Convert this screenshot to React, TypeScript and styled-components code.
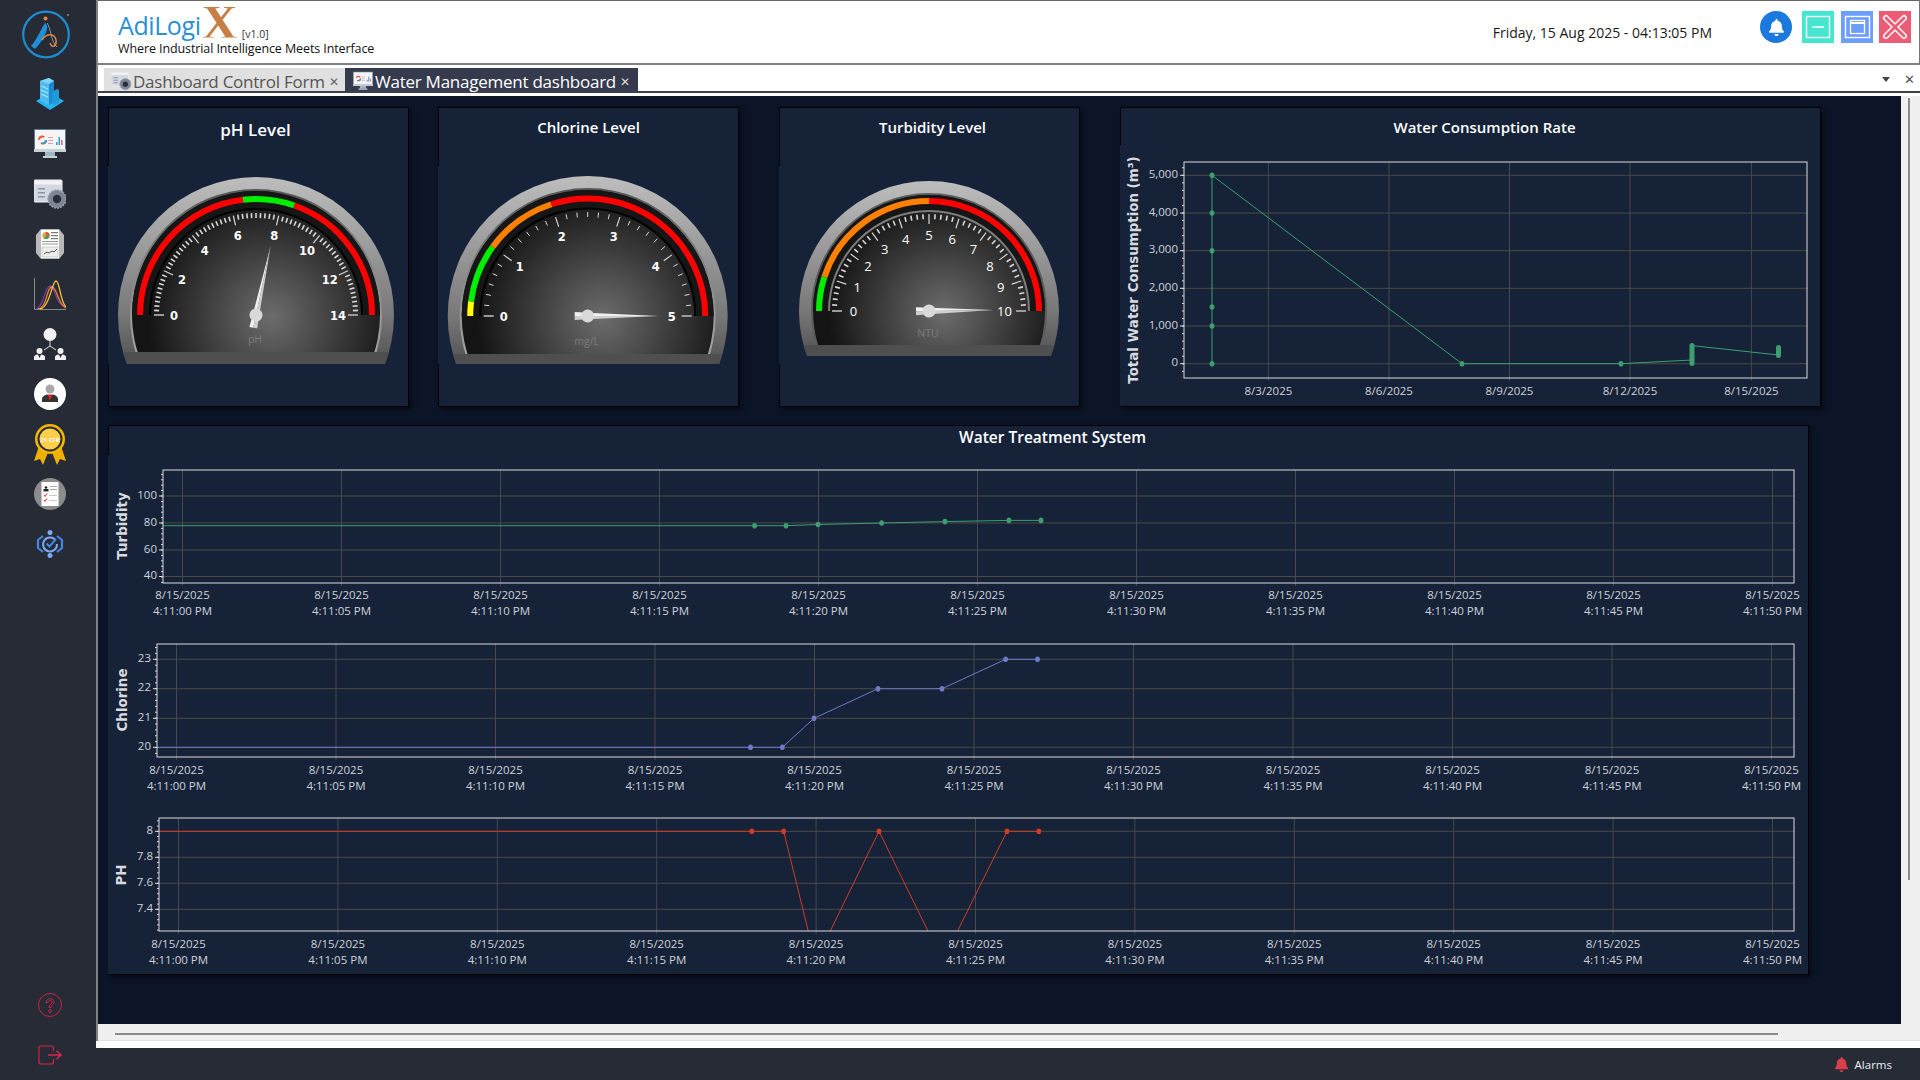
import React from "react";
import styled, { createGlobalStyle } from "styled-components";
import { FaBell } from "react-icons/fa";

const GlobalStyle = createGlobalStyle`
  html, body { margin: 0; padding: 0; background: #272b36; }
  * { box-sizing: border-box; }
  body { font-family: "Open Sans", "Noto Sans", sans-serif; }
`;

const Page = styled.div`
  width: 1920px;
  height: 1080px;
  display: grid;
  grid-template-columns: 96px 1fr;
  grid-template-rows: 1fr 32px;
  overflow: hidden;
  background: #272b36;
`;

const Sidebar = styled.aside`
  grid-row: 1 / 3;
  display: flex;
  flex-direction: column;
  align-items: center;
  padding: 10px 0 0 4px;
  background: #272b36;
`;

const LogoWrap = styled.div`
  width: 50px;
  height: 49px;
  margin: 0 0 10px -6px;
`;

const NavItem = styled.div`
  width: 32px;
  height: 50px;
  display: flex;
  align-items: center;
  justify-content: center;
`;

const SidebarBottom = styled.div`
  margin-top: auto;
  padding-bottom: 15px;
  display: flex;
  flex-direction: column;
  align-items: center;
  gap: 28px;
`;

const Main = styled.main`
  display: flex;
  flex-direction: column;
  background: #fff;
  min-width: 0;
`;

const Framed = styled.div`
  flex: 1;
  display: flex;
  flex-direction: column;
  border-left: 2px solid #808080;
  min-height: 0;
`;

const Header = styled.header`
  height: 65px;
  display: flex;
  align-items: flex-start;
  padding: 10px 8px 0 20px;
  background: #fff;
  border-top: 1px solid #666;
  border-right: 1px solid #777;
  border-bottom: 2px solid #808080;
`;

const Brand = styled.div`
  display: flex;
  flex-direction: column;
`;

const BrandLine = styled.div`
  height: 29px;
  display: flex;
  align-items: flex-end;
  white-space: nowrap;
`;

const BrandName = styled.span`
  font-size: 25px;
  line-height: 29px;
  color: #2a8fd6;
  letter-spacing: -0.4px;
`;

const BrandX = styled.span`
  font-family: "Liberation Serif", serif;
  font-weight: 700;
  font-size: 50px;
  line-height: 36px;
  height: 36px;
  margin-left: 1px;
  color: #c87f45;
  clip-path: inset(3px 0 2.4px 0);
`;

const Version = styled.span`
  font-size: 10.5px;
  line-height: 12px;
  color: #333;
  margin: 0 0 0 4px;
`;

const Tagline = styled.div`
  margin-top: 1px;
  font-size: 12.5px;
  line-height: 16px;
  color: #111;
  letter-spacing: -0.1px;
  white-space: nowrap;
`;

const Clock = styled.div`
  margin-left: auto;
  margin-right: 48px;
  padding-top: 12px;
  font-size: 14px;
  line-height: 19px;
  color: #1a1a1a;
  white-space: nowrap;
`;

const BellButton = styled.div`
  width: 32px;
  height: 32px;
  margin-right: 10px;
  border-radius: 50%;
  background: #1a78de;
  color: #fff;
  display: flex;
  align-items: center;
  justify-content: center;
`;

const WindowButton = styled.div<{ $bg: string; $gap?: number }>`
  width: 32px;
  height: 32px;
  margin-right: ${(p) => p.$gap ?? 0}px;
  background: ${(p) => p.$bg};
`;

const TabStrip = styled.div`
  height: 28px;
  display: flex;
  align-items: flex-end;
  padding-left: 6px;
  background: #fff;
  border-bottom: 2px solid #3a4050;
`;

const Tab = styled.div<{ $active?: boolean }>`
  height: 23px;
  width: ${(p) => (p.$active ? 293 : 241)}px;
  display: flex;
  align-items: center;
  gap: 2px;
  padding: 3px 0 0 ${(p) => (p.$active ? 8 : 7)}px;
  background: ${(p) => (p.$active ? "#353b4d" : "#e0e0e0")};
  color: ${(p) => (p.$active ? "#fff" : "#555")};
  font-size: 17px;
  white-space: nowrap;
  letter-spacing: -0.25px;
`;

const TabClose = styled.span<{ $active?: boolean }>`
  margin-left: 2px;
  font-size: 12px;
  color: ${(p) => (p.$active ? "#ddd" : "#666")};
`;

const StripTools = styled.div`
  margin-left: auto;
  height: 24px;
  display: flex;
  align-items: center;
  gap: 14px;
  padding-right: 5px;
  color: #555;
  font-size: 13px;
`;

const Caret = styled.span`
  width: 0;
  height: 0;
  border-left: 4px solid transparent;
  border-right: 4px solid transparent;
  border-top: 5px solid #444;
`;

const WhiteGap = styled.div`
  height: 3px;
  background: #fff;
`;

const ContentRow = styled.div`
  flex: 1;
  display: flex;
  min-height: 0;
  background: #f0f0f0;
`;

const Content = styled.div`
  width: 1803px;
  padding: 11px 0 0 10px;
  background: #0c1528;
  overflow: hidden;
`;

const VScroll = styled.div`
  width: 16px;
  padding: 2px 7px 144px;
  background: #f0f0f0;
`;

const Thumb = styled.div`
  width: 2px;
  height: 100%;
  background: #8a8a8a;
`;

const HScroll = styled.div`
  height: 17px;
  padding: 9px 142px 0 17px;
  background: #f0f0f0;
  border-bottom: 1px solid #e2e2e2;
`;

const HThumb = styled.div`
  height: 2px;
  background: #8a8a8a;
`;

const BottomWhite = styled.div`
  height: 7px;
  background: #fff;
`;

const StatusBar = styled.footer`
  display: flex;
  align-items: center;
  justify-content: flex-end;
  padding-right: 28px;
  gap: 6px;
  background: #272b36;
  color: #e8eef4;
  font-size: 11.5px;
  svg { color: #d9404a; }
`;

const TopRow = styled.div`
  display: flex;
  height: 300px;
`;

const Card = styled.section<{ $w: number; $ml?: number }>`
  width: ${(p) => p.$w}px;
  margin-left: ${(p) => p.$ml ?? 0}px;
  background: #152238;
  border: 1px solid #000;
  box-shadow: 3px 3px 4px #070c18;
`;

const WideCard = styled(Card)`
  height: 550px;
  margin-top: 18px;
`;

const CardTitle = styled.div<{ $h: number; $line: number; $size: number; $shift?: number }>`
  height: ${(p) => p.$h}px;
  line-height: ${(p) => p.$line}px;
  font-size: ${(p) => p.$size}px;
  font-weight: 600;
  text-align: center;
  text-indent: ${(p) => (p.$shift ?? 0) * 2}px;
  color: #fff;
  white-space: nowrap;
`;

const Bleed = styled.div`
  margin-left: -1px;
  background: #152238;
  svg { display: block; }
`;

/* ---------- gauges ---------- */

type Segment = { from: number; to: number; color: string };

type GaugeProps = {
  id: string;
  cx: number;
  cy: number;
  R: number;
  faceR: number;
  arcR: number;
  ringR: number;
  ringColor: string;
  tickR: number;
  labelR: number;
  max: number;
  step: number;
  divisions: number;
  segments: Segment[];
  value: number;
  unit: string;
  unitDy: number;
  needle: number;
  faceBottom: number;
  bandBottom: number;
  light?: boolean;
  minorWidth?: number;
};

const Gauge = (g: GaugeProps) => {
  const pt = (v: number, r: number) => {
    const a = Math.PI * (1 - v / g.max);
    return [g.cx + r * Math.cos(a), g.cy - r * Math.sin(a)];
  };
  const ticks: React.ReactNode[] = [];
  const count = Math.round(g.max / g.step);
  for (let i = 0; i <= count * g.divisions; i++) {
    const v = (i / (count * g.divisions)) * g.max;
    const major = i % g.divisions === 0;
    const end = i === 0 || i === count * g.divisions;
    const [x1, y1] = pt(v, g.tickR);
    const [x2, y2] = pt(v, g.tickR - (major ? 10 : 5));
    ticks.push(
      <line
        key={i}
        x1={x1}
        y1={y1}
        x2={x2}
        y2={y2}
        stroke={end ? "#9a9a9a" : "#d8d8d8"}
        strokeWidth={end ? 2 : major ? 1.2 : (g.minorWidth ?? 1.6)}
      />,
    );
  }
  const labels: React.ReactNode[] = [];
  for (let i = 0; i <= count; i++) {
    const v = i * g.step;
    const [x, y] = pt(v, g.labelR);
    labels.push(
      <text
        key={i}
        x={x}
        y={y + 4.5}
        textAnchor="middle"
        fontFamily={g.light ? "Open Sans, sans-serif" : "DejaVu Sans, sans-serif"}
        fontWeight={g.light ? 400 : 700}
        fontSize={g.light ? 13 : 11.5}
        fill="#fff"
      >
        {v}
      </text>,
    );
  }
  const rot = (g.value / g.max) * 180 - 180;
  const annulus = `M${g.cx - g.faceR} ${g.cy} A${g.faceR} ${g.faceR} 0 0 1 ${g.cx + g.faceR} ${g.cy} L${g.cx + g.ringR} ${g.cy} A${g.ringR} ${g.ringR} 0 0 0 ${g.cx - g.ringR} ${g.cy} Z`;
  return (
    <svg width={299} height={198} viewBox="0 0 299 198">
      <defs>
        <linearGradient id={`${g.id}-bezel`} x1="0" y1="0" x2="0" y2="1">
          <stop offset="0" stopColor="#bdbdbd" />
          <stop offset="0.12" stopColor="#aeaeae" />
          <stop offset="0.5" stopColor="#787878" />
          <stop offset="0.68" stopColor="#505050" />
        </linearGradient>
        <linearGradient id={`${g.id}-rim`} x1="0" y1="0" x2="0" y2="1">
          <stop offset="0" stopColor="#555" />
          <stop offset="0.35" stopColor="#8a8a8a" />
          <stop offset="0.7" stopColor="#a8a8a8" />
        </linearGradient>
        <radialGradient id={`${g.id}-face`} gradientUnits="userSpaceOnUse" cx={g.cx + 15} cy={g.cy + 2} r={g.faceR}>
          <stop offset="0" stopColor="#6c6c6c" />
          <stop offset="0.75" stopColor="#2a2a2a" />
          <stop offset="1" stopColor="#141414" />
        </radialGradient>
        <clipPath id={`${g.id}-outer`}>
          <rect x={0} y={0} width={299} height={g.bandBottom} />
        </clipPath>
        <clipPath id={`${g.id}-inner`}>
          <rect x={0} y={0} width={299} height={g.faceBottom} />
        </clipPath>
        <clipPath id={`${g.id}-round`}>
          <circle cx={g.cx} cy={g.cy} r={g.R} />
        </clipPath>
      </defs>
      <g clipPath={`url(#${g.id}-outer)`}>
        <circle cx={g.cx} cy={g.cy} r={g.R} fill={`url(#${g.id}-bezel)`} />
      </g>
      <g clipPath={`url(#${g.id}-round)`}>
        <rect x={0} y={g.faceBottom} width={299} height={g.bandBottom - g.faceBottom} fill="#4f4f4f" />
      </g>
      <g clipPath={`url(#${g.id}-inner)`}>
        <circle cx={g.cx} cy={g.cy} r={g.faceR + 2} fill={g.light ? "#5c5c5c" : `url(#${g.id}-rim)`} />
        <circle cx={g.cx} cy={g.cy} r={g.faceR} fill={`url(#${g.id}-face)`} />
      </g>
      <path d={annulus} fill="#161616" />
      <path
        d={`M${g.cx - g.ringR} ${g.cy} A${g.ringR} ${g.ringR} 0 0 1 ${g.cx + g.ringR} ${g.cy}`}
        fill="none"
        stroke={g.ringColor}
        strokeWidth={2}
      />
      {g.segments.map((s) => {
        const [x1, y1] = pt(s.from, g.arcR);
        const [x2, y2] = pt(s.to, g.arcR);
        return (
          <path key={s.from} d={`M${x1} ${y1} A${g.arcR} ${g.arcR} 0 0 1 ${x2} ${y2}`} fill="none" stroke={s.color} strokeWidth={6} />
        );
      })}
      {ticks}
      {labels}
      <text x={g.cx - 1} y={g.cy + g.unitDy} textAnchor="middle" fontSize={10.5} fill="#7c7c7c">
        {g.unit}
      </text>
      <g transform={`translate(${g.cx} ${g.cy}) rotate(${rot})`}>
        <polygon points={`${g.needle},0 0,-3.2 -13,-4 -13,0`} fill="#f0f0f0" />
        <polygon points={`${g.needle},0 0,3.2 -13,4 -13,0`} fill="#cfcfcf" />
        <circle r={6.5} fill="#d9d9d9" />
      </g>
    </svg>
  );
};

/* ---------- line charts ---------- */

type Tick = { pos: number; label: string };

type ChartProps = {
  id: string;
  ox: number;
  oy: number;
  w: number;
  h: number;
  x0: number;
  x1: number;
  y0: number;
  y1: number;
  xTicks: { pos: number; lines: string[] }[];
  yTicks: Tick[];
  title: string;
  titleX: number;
  titleY: number;
  color: string;
  line: number[][];
  markers: number[][];
  blobs?: number[][];
  labelGap: number;
};

const Chart = (c: ChartProps) => {
  const step = c.yTicks[1].pos - c.yTicks[0].pos;
  const minors: number[] = [];
  for (let y = c.yTicks[0].pos - step * 2; y < c.y1; y += step / 5) {
    if (y > c.y0) minors.push(y);
  }
  return (
    <svg width={c.w} height={c.h} viewBox={`${c.ox} ${c.oy} ${c.w} ${c.h}`}>
      <defs>
        <clipPath id={c.id}>
          <rect x={c.x0} y={c.y0} width={c.x1 - c.x0} height={c.y1 - c.y0} />
        </clipPath>
      </defs>
      {c.yTicks.map((t) => (
        <line key={t.label} x1={c.x0} x2={c.x1} y1={t.pos} y2={t.pos} stroke="#4d4b44" strokeWidth={1} />
      ))}
      {c.xTicks.map((t) => (
        <line key={t.pos} x1={t.pos} x2={t.pos} y1={c.y0} y2={c.y1 + 3} stroke="#45484e" strokeWidth={1} />
      ))}
      {minors.map((y) => (
        <line key={y} x1={c.x0 - 2} x2={c.x0} y1={y} y2={y} stroke="#d8d8d8" strokeWidth={1} />
      ))}
      {c.yTicks.map((t) => (
        <line key={t.label} x1={c.x0 - 4} x2={c.x0} y1={t.pos} y2={t.pos} stroke="#e0e0e0" strokeWidth={1} />
      ))}
      <g clipPath={`url(#${c.id})`}>
        <polyline points={c.line.map((p) => p.join(",")).join(" ")} fill="none" stroke={c.color} strokeWidth={1} />
        {c.markers.map((p) => (
          <ellipse key={p.join("-")} cx={p[0]} cy={p[1]} rx={2.4} ry={2.8} fill={c.color} />
        ))}
        {c.blobs?.map((b) => (
          <rect key={b.join("-")} x={b[0] - 2.5} y={b[1]} width={5} height={b[2] - b[1]} rx={2.5} fill={c.color} />
        ))}
      </g>
      <rect x={c.x0} y={c.y0} width={c.x1 - c.x0} height={c.y1 - c.y0} fill="none" stroke="#dcdcdc" strokeWidth={1} />
      {c.yTicks.map((t) => (
        <text key={t.label} x={c.x0 - 6} y={t.pos + 2.5} textAnchor="end" fontSize={11.5} fill="#cfd2d8">
          {t.label}
        </text>
      ))}
      {c.xTicks.map((t) =>
        t.lines.map((l, i) => (
          <text key={l} x={t.pos} y={c.y1 + c.labelGap + i * 16} textAnchor="middle" fontSize={11.5} fill="#cfd2d8">
            {l}
          </text>
        )),
      )}
      <text
        x={c.titleX}
        y={c.titleY}
        transform={`rotate(-90 ${c.titleX} ${c.titleY})`}
        textAnchor="middle"
        dominantBaseline="central"
        fontFamily="DejaVu Sans, sans-serif"
        fontWeight={700}
        fontSize={13.4}
        fill="#d8dade"
      >
        {c.title}
      </text>
    </svg>
  );
};

const timeLabels = ["4:11:00 PM", "4:11:05 PM", "4:11:10 PM", "4:11:15 PM", "4:11:20 PM", "4:11:25 PM", "4:11:30 PM", "4:11:35 PM", "4:11:40 PM", "4:11:45 PM", "4:11:50 PM"];
const timeTicks = (start: number, step: number) =>
  timeLabels.map((t, i) => ({ pos: start + i * step, lines: ["8/15/2025", t] }));

const turbidityPts = [[754.6, 525.7], [786, 525.7], [818, 524.5], [881.6, 523], [945, 521.6], [1009, 520.4], [1041, 520.4]];
const chlorinePts = [[750.5, 747.3], [782.4, 747.3], [814, 718.3], [878, 688.7], [942, 688.7], [1005.6, 659.3], [1037.5, 659.3]];
const phTop = [[751.8, 831.3], [783.7, 831.3], [879, 831.3], [1007, 831.3], [1038.8, 831.3]];
const phLine = [[159, 831.3], [751.8, 831.3], [783.7, 831.3], [815.6, 961], [879, 831.3], [942.7, 961], [1007, 831.3], [1038.8, 831.3]];

/* ---------- sidebar drawings ---------- */

const LogoMark = () => (
  <svg width={50} height={49} viewBox="0 0 50 49">
    <circle cx={24} cy={24.5} r={22.8} fill="none" stroke="#1c8ed0" strokeWidth={2.2} />
    <path d="M9 36 C15 30 19 18 24 12 C28 14 24 28 13 39Z" fill="#1f8fd6" />
    <path d="M24 12 C28 16 30 32 35 36" fill="none" stroke="#1b1f2a" strokeWidth={2} />
    <path d="M25 13 C29 18 29 32 35 37" fill="none" stroke="#9ec6e6" strokeWidth={0.8} />
    <path d="M20 30 C25 22 33 24 34 30 C35 36 30 39 28 33" fill="none" stroke="#e08a3a" strokeWidth={1.5} />
    <circle cx={23.5} cy={8.5} r={2} fill="#e8873a" />
    <circle cx={46} cy={5} r={1} fill="#888" />
  </svg>
);

const BuildingIcon = () => (
  <svg width={28} height={32} viewBox="0 0 28 32">
    <polygon points="0,23 14,15 28,23 14,32" fill="#23b6f2" />
    <polygon points="4,3 13,0 18,3 18,24 13,27 4,22" fill="#4bbcf4" />
    <polygon points="4,3 13,0 18,3 13,6" fill="#7fd4f9" />
    <polygon points="13,6 18,3 18,24 13,27" fill="#1e88cc" />
    <polygon points="16,14 21,11 23,12 23,25 18,27 16,25" fill="#1f9ada" />
    <g stroke="#c4ebfd" strokeWidth={1}>
      <line x1={5} y1={8} x2={12} y2={11} />
      <line x1={5} y1={12} x2={12} y2={15} />
      <line x1={5} y1={16} x2={12} y2={19} />
    </g>
  </svg>
);

const MonitorIcon = ({ size = 32 }: { size?: number }) => (
  <svg width={size} height={size} viewBox="0 0 32 32">
    <rect x={0} y={1} width={32} height={23} fill="#5f7a88" />
    <rect x={1} y={2} width={30} height={19} fill="#f5f5f5" />
    <rect x={0} y={21} width={32} height={3} fill="#c6d2d8" />
    <rect x={11} y={24} width={10} height={4} fill="#9fb6c0" />
    <rect x={9} y={28} width={14} height={2} fill="#c6d2d8" />
    <circle cx={8.5} cy={12} r={3.5} fill="none" stroke="#e85a3a" strokeWidth={2} strokeDasharray="7 4" />
    <circle cx={8.5} cy={12} r={3.5} fill="none" stroke="#2a9fd6" strokeWidth={2} strokeDasharray="5 17" />
    <rect x={14} y={9} width={5} height={1} fill="#e8a0a0" />
    <rect x={14} y={12} width={5} height={1} fill="#e8a0a0" />
    <rect x={14} y={15} width={5} height={1} fill="#e8a0a0" />
    <rect x={22} y={14} width={1.5} height={3} fill="#2a9fd6" />
    <rect x={24.5} y={9} width={1.5} height={8} fill="#2a9fd6" />
    <rect x={27} y={12} width={1.5} height={5} fill="#e85a7a" />
  </svg>
);

const FormGearIcon = ({ size = 32 }: { size?: number }) => (
  <svg width={size} height={size} viewBox="0 0 32 32">
    <rect x={0} y={2} width={28} height={22} rx={1} fill="#d4d8e2" stroke="#f2f2f2" strokeWidth={1} />
    <rect x={0.5} y={2.5} width={27} height={4} fill="#f2f2f2" />
    <rect x={4} y={10} width={7} height={1.5} fill="#8d94a4" />
    <rect x={4} y={14} width={7} height={1.5} fill="#8d94a4" />
    <rect x={4} y={18} width={7} height={1.5} fill="#8d94a4" />
    <circle cx={23} cy={21} r={9} fill="#7e8694" stroke="#9aa1ad" strokeWidth={1.5} strokeDasharray="2 1" />
    <circle cx={23} cy={21} r={4.2} fill="#2b2e38" />
  </svg>
);

const ReportIcon = () => (
  <svg width={30} height={32} viewBox="0 0 30 32">
    <polygon points="6,1 24,1 29,7 29,25 24,31 6,31 1,25 1,7" fill="#b9b9b9" />
    <rect x={6} y={2} width={18} height={28} fill="#fff" />
    <circle cx={11} cy={7.5} r={3.6} fill="#d9a441" />
    <path d="M11 7.5 L11 3.9 A3.6 3.6 0 0 1 14.6 7.5Z" fill="#e0503a" />
    <path d="M11 7.5 L14.6 7.5 A3.6 3.6 0 0 1 9 10.5Z" fill="#4a9a5a" />
    <rect x={16} y={4} width={7} height={1.2} fill="#777" />
    <rect x={16} y={7} width={7} height={1.2} fill="#777" />
    <rect x={16} y={10} width={7} height={1.2} fill="#777" />
    <rect x={7} y={13} width={16} height={1} fill="#999" />
    <rect x={7} y={15.5} width={16} height={1} fill="#999" />
    <rect x={7} y={19} width={16} height={10} fill="#eee" stroke="#aaa" strokeWidth={0.5} />
    <polyline points="9,26 12,24 14,25 17,23 19,24 22,21" fill="none" stroke="#333" strokeWidth={0.8} />
  </svg>
);

const CurvesIcon = () => (
  <svg width={32} height={32} viewBox="0 0 32 32">
    <path d="M0.5 0 V31.5 H32" fill="none" stroke="#8a8a8a" strokeWidth={1} />
    <path d="M2 31 C10 29 10 9 16 8 C22 8 20 26 32 29" fill="none" stroke="#6b3fa0" strokeWidth={1.3} />
    <path d="M4 31 C14 29 12 9 18 9 C23 9 24 27 32 30" fill="none" stroke="#ef7a2a" strokeWidth={1.3} />
    <path d="M6 31 C16 29 18 3 22 3 C26 3 26 24 32 29" fill="none" stroke="#f3c445" strokeWidth={1.3} />
  </svg>
);

const HierarchyIcon = () => (
  <svg width={32} height={32} viewBox="0 0 32 32">
    <circle cx={16} cy={6.5} r={6.5} fill="#f0f0f0" />
    <path d="M16 13 V18 M16 18 L10 22 M16 18 L22 22" stroke="#ddd" strokeWidth={1} fill="none" />
    <circle cx={5.5} cy={23} r={3} fill="#f0f0f0" />
    <path d="M0 32 V29 Q0 27 4 26.5 L5.5 30 L7 26.5 Q11 27 11 29 V32Z" fill="#f0f0f0" />
    <circle cx={26.5} cy={23} r={3} fill="#f0f0f0" />
    <path d="M21 32 V29 Q21 27 25 26.5 L26.5 30 L28 26.5 Q32 27 32 29 V32Z" fill="#f0f0f0" />
  </svg>
);

const PersonIcon = () => (
  <svg width={32} height={32} viewBox="0 0 32 32">
    <circle cx={16} cy={16} r={16} fill="#fff" />
    <circle cx={16} cy={11} r={4.5} fill="#a8a8a8" />
    <path d="M8 24 V21 Q8 18 13 16.5 L16 18 L19 16.5 Q24 18 24 21 V24Z" fill="#333" />
    <polygon points="13.5,16.5 18.5,16.5 16,23" fill="#d8232a" />
  </svg>
);

const AwardIcon = () => (
  <svg width={32} height={41} viewBox="0 0 32 41">
    <polygon points="5,22 0,37 6,35 9,41 15,26" fill="#f0b000" />
    <polygon points="27,22 32,37 26,35 23,41 17,26" fill="#f0b000" />
    <circle cx={16} cy={15} r={15} fill="#f3b800" />
    <circle cx={16} cy={15} r={11.5} fill="#ffce4a" stroke="#2c2c34" strokeWidth={2} />
    <text x={16} y={17.5} textAnchor="middle" fontSize={6} fontWeight={700} fill="#fff">
      21 CFR
    </text>
  </svg>
);

const DocCircleIcon = () => (
  <svg width={32} height={32} viewBox="0 0 32 32">
    <circle cx={16} cy={16} r={16} fill="#8c8c8c" />
    <rect x={7.5} y={4} width={17} height={24} fill="#fff" />
    <circle cx={12} cy={9.5} r={1.3} fill="#222" />
    <rect x={9.5} y={11} width={5} height={2.4} fill="#222" />
    <rect x={16} y={8} width={7} height={1} fill="#aaa" />
    <rect x={16} y={11} width={7} height={1} fill="#aaa" />
    <path d="M10 17 L11 18.5 L13 15.5 M10 22 L11 23.5 L13 20.5" fill="none" stroke="#d8232a" strokeWidth={1} />
    <rect x={15} y={17} width={8} height={1} fill="#ccc" />
    <rect x={15} y={22} width={8} height={1} fill="#ccc" />
  </svg>
);

const SyncIcon = () => (
  <svg width={28} height={28} viewBox="0 0 28 28">
    <path d="M7 6 L2 10 V18 L7 22" fill="none" stroke="#3f86e6" strokeWidth={2.2} strokeLinejoin="round" />
    <path d="M21 6 L26 10 V18 L21 22" fill="none" stroke="#3f86e6" strokeWidth={2.2} strokeLinejoin="round" />
    <circle cx={14} cy={2.5} r={2.5} fill="#7aaaf0" />
    <circle cx={14} cy={25.5} r={2.5} fill="#7aaaf0" />
    <path d="M19 9.5 A7 7 0 1 0 21 14" fill="none" stroke="#7aaaf0" strokeWidth={2} />
    <path d="M10.5 13.5 L13.5 16.5 L20 9" fill="none" stroke="#3f86e6" strokeWidth={2} />
  </svg>
);

const HelpIcon = () => (
  <svg width={24} height={24} viewBox="0 0 24 24" fill="none" stroke="#c9234a" strokeWidth={1}>
    <circle cx={12} cy={12} r={11.5} />
    <path d="M8 9.5 C8 4.5 16 4.5 16 9.5 C16 12 13 12 12.8 14.6 H11 C11 11 14 11 14 9.3 C14 7 10 7 10 9.5Z" />
    <path d="M12 16 L13.5 18 L12 20 L10.5 18Z" />
  </svg>
);

const ExitIcon = () => (
  <svg width={24} height={20} viewBox="0 0 24 20" fill="none" stroke="#d8264f" strokeWidth={1.1}>
    <path d="M15.5 6 V3 Q15.5 1 13.5 1 H3 Q1 1 1 3 V17 Q1 19 3 19 H13.5 Q15.5 19 15.5 17 V14" />
    <path d="M10 10 H23 M18.5 5.8 L23 10 L18.5 14.2" strokeWidth={1.4} />
  </svg>
);

const MinimizeGlyph = () => (
  <svg width={32} height={32} viewBox="0 0 32 32" fill="none" stroke="#fff">
    <rect x={4.5} y={5.5} width={23} height={21} strokeWidth={1.4} />
    <line x1={10} y1={16} x2={22} y2={16} strokeWidth={1.6} />
  </svg>
);

const MaximizeGlyph = () => (
  <svg width={32} height={32} viewBox="0 0 32 32" fill="none" stroke="#fff">
    <rect x={4.5} y={5.5} width={24} height={21} strokeWidth={1.4} />
    <rect x={9.5} y={9.5} width={14} height={13} strokeWidth={1.3} />
    <line x1={9.5} y1={12} x2={23.5} y2={12} strokeWidth={2} />
  </svg>
);

const CloseGlyph = () => (
  <svg width={32} height={32} viewBox="0 0 32 32" fill="none" strokeLinecap="round">
    <path d="M7 7 L25 25 M25 7 L7 25" stroke="#fff" strokeWidth={6} />
    <path d="M7 7 L25 25 M25 7 L7 25" stroke="#ec5c74" strokeWidth={3} />
  </svg>
);

const App = () => {
  const navIcons = [
    <BuildingIcon key="a" />,
    <MonitorIcon key="b" />,
    <FormGearIcon key="c" />,
    <ReportIcon key="d" />,
    <CurvesIcon key="e" />,
    <HierarchyIcon key="f" />,
    <PersonIcon key="g" />,
    <AwardIcon key="h" />,
    <DocCircleIcon key="i" />,
    <SyncIcon key="j" />,
  ];

  return (
    <Page>
      <GlobalStyle />
      <Sidebar>
        <LogoWrap>
          <LogoMark />
        </LogoWrap>
        {navIcons.map((icon) => (
          <NavItem key={icon.key}>{icon}</NavItem>
        ))}
        <SidebarBottom>
          <HelpIcon />
          <ExitIcon />
        </SidebarBottom>
      </Sidebar>

      <Main>
        <Framed>
          <Header>
            <Brand>
              <BrandLine>
                <BrandName>AdiLogi</BrandName>
                <BrandX>X</BrandX>
                <Version>[v1.0]</Version>
              </BrandLine>
              <Tagline>Where Industrial Intelligence Meets Interface</Tagline>
            </Brand>
            <Clock>Friday, 15 Aug 2025 - 04:13:05 PM</Clock>
            <BellButton>
              <FaBell size={17} />
            </BellButton>
            <WindowButton $bg="#45e6d0" $gap={7}>
              <MinimizeGlyph />
            </WindowButton>
            <WindowButton $bg="#6c9eff" $gap={6}>
              <MaximizeGlyph />
            </WindowButton>
            <WindowButton $bg="#ec5c74">
              <CloseGlyph />
            </WindowButton>
          </Header>

          <TabStrip>
            <Tab>
              <FormGearIcon size={20} />
              Dashboard Control Form
              <TabClose>✕</TabClose>
            </Tab>
            <Tab $active>
              <MonitorIcon size={20} />
              Water Management dashboard
              <TabClose $active>✕</TabClose>
            </Tab>
            <StripTools>
              <Caret />
              <span>✕</span>
            </StripTools>
          </TabStrip>
          <WhiteGap />

          <ContentRow>
            <Content>
              <TopRow>
                <Card $w={301}>
                  <CardTitle $h={58} $line={44} $size={17} $shift={-3}>
                    pH Level
                  </CardTitle>
                  <Bleed>
                    <Gauge
                      id="ph"
                      cx={148}
                      cy={149}
                      R={138}
                      faceR={124}
                      arcR={116}
                      ringR={106}
                      ringColor="#000"
                      tickR={102}
                      labelR={82}
                      max={14}
                      step={2}
                      divisions={10}
                      segments={[
                        { from: 0, to: 6.5, color: "#ff0000" },
                        { from: 6.5, to: 8.5, color: "#00ee00" },
                        { from: 8.5, to: 14, color: "#ff0000" },
                      ]}
                      value={7.93}
                      unit="pH"
                      unitDy={28}
                      needle={71}
                      faceBottom={186}
                      bandBottom={198}
                    />
                  </Bleed>
                </Card>
                <Card $w={301} $ml={29}>
                  <CardTitle $h={58} $line={38} $size={15}>
                    Chlorine Level
                  </CardTitle>
                  <Bleed>
                    <Gauge
                      id="cl"
                      cx={149.7}
                      cy={150}
                      R={140}
                      faceR={126}
                      arcR={117.5}
                      ringR={107.5}
                      ringColor="#000"
                      tickR={104}
                      labelR={84}
                      max={5}
                      step={1}
                      divisions={6}
                      minorWidth={1}
                      segments={[
                        { from: 0, to: 0.2, color: "#ffff00" },
                        { from: 0.2, to: 1, color: "#00ee00" },
                        { from: 1, to: 2, color: "#ff7f00" },
                        { from: 2, to: 5, color: "#ff0000" },
                      ]}
                      value={5}
                      unit="mg/L"
                      unitDy={29}
                      needle={71}
                      faceBottom={188}
                      bandBottom={198}
                    />
                  </Bleed>
                </Card>
                <Card $w={301} $ml={40}>
                  <CardTitle $h={58} $line={38} $size={15} $shift={3}>
                    Turbidity Level
                  </CardTitle>
                  <Bleed>
                    <Gauge
                      id="tb"
                      cx={150}
                      cy={145}
                      R={130}
                      faceR={116}
                      arcR={110}
                      ringR={100}
                      ringColor="#7c7c7c"
                      tickR={97}
                      labelR={75.5}
                      max={10}
                      step={1}
                      divisions={5}
                      segments={[
                        { from: 0, to: 1, color: "#00ee00" },
                        { from: 1, to: 5, color: "#ff7f00" },
                        { from: 5, to: 10, color: "#ff0000" },
                      ]}
                      value={9.95}
                      unit="NTU"
                      unitDy={26}
                      needle={64}
                      faceBottom={179}
                      bandBottom={190}
                      light
                    />
                  </Bleed>
                </Card>
                <Card $w={701} $ml={40}>
                  <CardTitle $h={37} $line={38} $size={15} $shift={14}>
                    Water Consumption Rate
                  </CardTitle>
                  <Bleed>
                    <Chart
                      id="consumption"
                      ox={1120}
                      oy={145}
                      w={700}
                      h={261}
                      x0={1184}
                      x1={1807}
                      y0={162}
                      y1={378}
                      xTicks={[
                        { pos: 1268.4, lines: ["8/3/2025"] },
                        { pos: 1389, lines: ["8/6/2025"] },
                        { pos: 1509.5, lines: ["8/9/2025"] },
                        { pos: 1630, lines: ["8/12/2025"] },
                        { pos: 1751.4, lines: ["8/15/2025"] },
                      ]}
                      yTicks={[
                        { pos: 175.3, label: "5,000" },
                        { pos: 213, label: "4,000" },
                        { pos: 250.7, label: "3,000" },
                        { pos: 288.3, label: "2,000" },
                        { pos: 326, label: "1,000" },
                        { pos: 363.7, label: "0" },
                      ]}
                      title="Total Water Consumption (m³)"
                      titleX={1133}
                      titleY={270}
                      color="#3d9f70"
                      line={[[1212, 363.7], [1212, 175.3], [1462, 363.7], [1621, 363.7], [1692, 360], [1692, 345.6], [1778.5, 355]]}
                      markers={[[1212, 175.3], [1212, 213], [1212, 250.7], [1212, 307], [1212, 326], [1212, 363.7], [1462, 363.7], [1621, 363.7]]}
                      blobs={[[1692, 343, 366], [1778.5, 345, 358]]}
                      labelGap={17}
                    />
                  </Bleed>
                </Card>
              </TopRow>

              <WideCard $w={1701}>
                <CardTitle $h={29} $line={22} $size={15.5} $shift={94}>
                  Water Treatment System
                </CardTitle>
                <Bleed>
                  <Chart
                    id="turbidity"
                    ox={108}
                    oy={455}
                    w={1700}
                    h={175}
                    x0={163}
                    x1={1794}
                    y0={470}
                    y1={583}
                    xTicks={timeTicks(182.5, 159)}
                    yTicks={[
                      { pos: 496, label: "100" },
                      { pos: 523, label: "80" },
                      { pos: 550, label: "60" },
                      { pos: 576.5, label: "40" },
                    ]}
                    title="Turbidity"
                    titleX={122}
                    titleY={526}
                    color="#3d9f70"
                    line={[[163, 525.7], ...turbidityPts]}
                    markers={turbidityPts}
                    labelGap={16}
                  />
                  <Chart
                    id="chlorine"
                    ox={108}
                    oy={630}
                    w={1700}
                    h={175}
                    x0={157}
                    x1={1794}
                    y0={644}
                    y1={757}
                    xTicks={timeTicks(176.5, 159.5)}
                    yTicks={[
                      { pos: 659.3, label: "23" },
                      { pos: 688.7, label: "22" },
                      { pos: 718.3, label: "21" },
                      { pos: 747.3, label: "20" },
                    ]}
                    title="Chlorine"
                    titleX={122}
                    titleY={700}
                    color="#6f7bc8"
                    line={[[157, 747.3], ...chlorinePts]}
                    markers={chlorinePts}
                    labelGap={17}
                  />
                  <Chart
                    id="phtrend"
                    ox={108}
                    oy={805}
                    w={1700}
                    h={169}
                    x0={159}
                    x1={1794}
                    y0={818}
                    y1={931}
                    xTicks={timeTicks(178.5, 159.4)}
                    yTicks={[
                      { pos: 831.3, label: "8" },
                      { pos: 857.3, label: "7.8" },
                      { pos: 883.3, label: "7.6" },
                      { pos: 909.3, label: "7.4" },
                    ]}
                    title="PH"
                    titleX={121}
                    titleY={875}
                    color="#d23c26"
                    line={phLine}
                    markers={phTop}
                    labelGap={17}
                  />
                </Bleed>
              </WideCard>
            </Content>
            <VScroll>
              <Thumb />
            </VScroll>
          </ContentRow>

          <HScroll>
            <HThumb />
          </HScroll>
        </Framed>
        <BottomWhite />
      </Main>

      <StatusBar>
        <FaBell size={15} />
        Alarms
      </StatusBar>
    </Page>
  );
};

export default App;
